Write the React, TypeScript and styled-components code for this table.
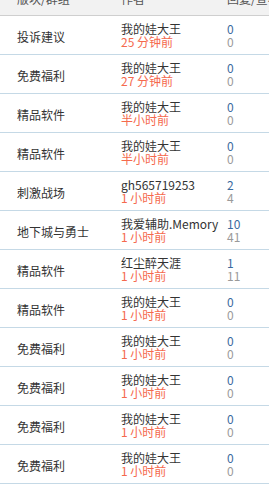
import styled, { createGlobalStyle } from "styled-components";

const rows = [
  { board: "投诉建议", author: "我的娃大王", time: "25 分钟前", reply: "0", view: "0" },
  { board: "免费福利", author: "我的娃大王", time: "27 分钟前", reply: "0", view: "0" },
  { board: "精品软件", author: "我的娃大王", time: "半小时前", reply: "0", view: "0" },
  { board: "精品软件", author: "我的娃大王", time: "半小时前", reply: "0", view: "0" },
  { board: "刺激战场", author: "gh565719253", time: "1 小时前", reply: "2", view: "4" },
  { board: "地下城与勇士", author: "我爱辅助.Memory", time: "1 小时前", reply: "10", view: "41" },
  { board: "精品软件", author: "红尘醉天涯", time: "1 小时前", reply: "1", view: "11" },
  { board: "精品软件", author: "我的娃大王", time: "1 小时前", reply: "0", view: "0" },
  { board: "免费福利", author: "我的娃大王", time: "1 小时前", reply: "0", view: "0" },
  { board: "免费福利", author: "我的娃大王", time: "1 小时前", reply: "0", view: "0" },
  { board: "免费福利", author: "我的娃大王", time: "1 小时前", reply: "0", view: "0" },
  { board: "免费福利", author: "我的娃大王", time: "1 小时前", reply: "0", view: "0" },
];

const App = () => {
  return (
    <>
      <GlobalStyle />
      <Table>
        <HeadRow>
          <span>版块/群组</span>
          <span>作者</span>
          <span>回复/查看</span>
        </HeadRow>
        {rows.map((r, i) => (
          <Row key={i}>
            <Board>{r.board}</Board>
            <Stack>
              <Author>{r.author}</Author>
              <Time>{r.time}</Time>
            </Stack>
            <Stack>
              <Reply>{r.reply}</Reply>
              <View>{r.view}</View>
            </Stack>
          </Row>
        ))}
      </Table>
    </>
  );
};

export default App;

const GlobalStyle = createGlobalStyle`
  html, body {
    margin: 0;
    padding: 0;
    background: #fff;
    overflow: hidden;
  }
  body {
    font-family: "Noto Sans CJK SC", "Liberation Sans", sans-serif;
    font-size: 12px;
  }
`
const Table = styled.div`
  width: 100%;
  margin-top: -18px;
  display: flex;
  flex-direction: column;
`
const Grid = styled.div`
  display: grid;
  grid-template-columns: 104px 106px 1fr;
  padding-left: 17px;
  white-space: nowrap;
`
const HeadRow = styled(Grid)`
  height: 33px;
  align-items: center;
  background: #f2f2f2;
  border-bottom: 1px solid #cfcfcf;
  color: #555;
  font-size: 12px;
`
const Row = styled(Grid)`
  height: 38px;
  align-items: center;
  border-bottom: 1px solid #c5d9e6;
`
const Board = styled.span`
  color: #333;
  font-size: 12px;
  padding-top: 2px;
`
const Stack = styled.div`
  display: flex;
  flex-direction: column;
  line-height: 13px;
`
const Author = styled.span`
  color: #333;
`
const Time = styled.span`
  color: #f5694d;
`
const Reply = styled.span`
  color: #3a6a9e;
`
const View = styled.span`
  color: #9a9a9a;
`
